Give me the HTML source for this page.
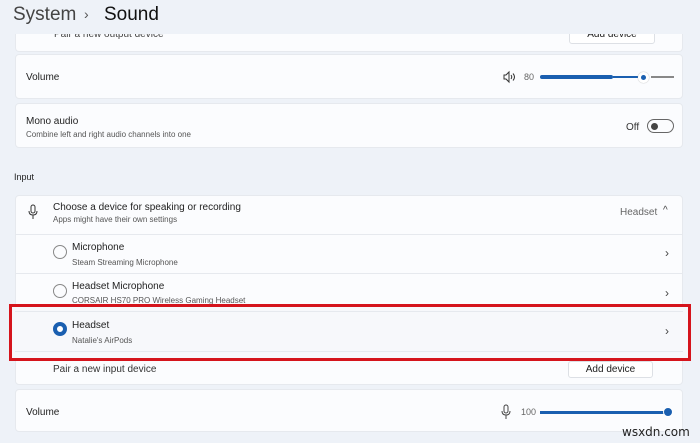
<!DOCTYPE html>
<html><head><meta charset="utf-8"><style>
*{box-sizing:border-box;margin:0;padding:0}
body{width:700px;height:443px;overflow:hidden;background:#eef2f8;font-family:"Liberation Sans",sans-serif;color:#1b1b1b;position:relative}
.a{position:absolute;white-space:nowrap}
.card{position:absolute;left:15px;width:668px;background:#fbfcfe;border-radius:4px;border:1px solid #e6e9ee}
.t{font-size:10px;color:#222}
.s{font-size:8px;color:#555}
.btn{position:absolute;background:#fff;border:1px solid #dde0e5;border-radius:3px;font-size:10px;text-align:center}
.chev{font-size:12px;color:#444}
.line{position:absolute;left:15px;width:668px;height:1px;background:#e6e9ee}
</style></head><body>
<div class="card" style="top:24px;height:28px;border-top:none;border-radius:0 0 4px 4px;overflow:hidden">
 <div class="a t" style="left:38px;top:5px;color:#444">Pair a new output device</div>
 <div class="btn" style="left:553px;top:1px;width:86px;height:19px;line-height:18px">Add device</div>
</div>
<div style="position:absolute;left:0;top:0;width:700px;height:34px;background:#eef2f8"></div>
<div class="a" style="left:13px;top:4px;font-size:19px;color:#444">System</div>
<div class="a" style="left:84px;top:6px;font-size:14px;color:#555">›</div>
<div class="a" style="left:104px;top:4px;font-size:19px;color:#111">Sound</div>

<div class="card" style="top:54px;height:45px">
 <div class="a t" style="left:10px;top:17px">Volume</div>
 <svg class="a" style="left:487px;top:15px" width="14" height="14" viewBox="0 0 14 14" fill="none" stroke="#333" stroke-width="1"><path d="M1 5h2l3-3v10l-3-3H1z"/><path d="M8 5q1.5 2 0 4M10 3.5q3 3.5 0 7"/></svg>
 <div class="a" style="left:508px;top:17px;font-size:9px;color:#666">80</div>
 <div class="a" style="left:524px;top:20px;width:73px;height:4px;background:#1a5fb0;border-radius:2px"></div>
 <div class="a" style="left:597px;top:21px;width:30px;height:2px;background:#1a5fb0"></div>
 <div class="a" style="left:622px;top:17px;width:11px;height:11px;border-radius:50%;background:#fff;box-shadow:0 0 1px #999"></div>
 <div class="a" style="left:625px;top:20px;width:5px;height:5px;border-radius:50%;background:#1a5fb0"></div>
 <div class="a" style="left:635px;top:21px;width:23px;height:2px;background:#888"></div>
</div>

<div class="card" style="top:103px;height:45px">
 <div class="a t" style="left:10px;top:12px">Mono audio</div>
 <div class="a s" style="left:10px;top:26px">Combine left and right audio channels into one</div>
 <div class="a" style="left:610px;top:18px;font-size:10px;color:#333">Off</div>
 <div class="a" style="left:631px;top:15px;width:27px;height:14px;border:1px solid #666;border-radius:7px"></div>
 <div class="a" style="left:635px;top:19px;width:7px;height:7px;border-radius:50%;background:#444"></div>
</div>

<div class="a" style="left:14px;top:172px;font-size:9px;color:#222">Input</div>

<div class="card" style="top:195px;height:190px"></div>
<svg class="a" style="left:28px;top:204px" width="10" height="16" viewBox="0 0 10 16" fill="none" stroke="#333" stroke-width="1"><rect x="3" y="1" width="4" height="8" rx="2"/><path d="M1 7q0 4 4 4t4-4M5 11v4"/></svg>
<div class="a t" style="left:53px;top:202px">Choose a device for speaking or recording</div>
<div class="a s" style="left:53px;top:215px">Apps might have their own settings</div>
<div class="a" style="left:620px;top:207px;font-size:10px;color:#666">Headset</div>
<div class="a" style="left:663px;top:205px;font-size:10px;color:#444">^</div>
<div class="line" style="top:234px"></div>

<div class="a" style="left:53px;top:245px;width:14px;height:14px;border:1px solid #888;border-radius:50%"></div>
<div class="a t" style="left:72px;top:242px">Microphone</div>
<div class="a s" style="left:72px;top:258px">Steam Streaming Microphone</div>
<div class="a chev" style="left:665px;top:246px">›</div>
<div class="line" style="top:273px"></div>

<div class="a" style="left:53px;top:284px;width:14px;height:14px;border:1px solid #888;border-radius:50%"></div>
<div class="a t" style="left:72px;top:281px">Headset Microphone</div>
<div class="a s" style="left:72px;top:296px">CORSAIR HS70 PRO Wireless Gaming Headset</div>
<div class="a chev" style="left:665px;top:286px">›</div>

<div class="a" style="left:9px;top:304px;width:682px;height:57px;background:#f7f8fb;border:3px solid #d5141c"></div>
<div class="line" style="top:311px"></div>
<div class="line" style="top:351px"></div>
<div class="a" style="left:53px;top:322px;width:14px;height:14px;border:4px solid #1a5fb0;border-radius:50%;background:#fff"></div>
<div class="a t" style="left:72px;top:320px">Headset</div>
<div class="a s" style="left:72px;top:336px">Natalie's AirPods</div>
<div class="a chev" style="left:665px;top:324px">›</div>

<div class="a t" style="left:53px;top:364px;color:#333">Pair a new input device</div>
<div class="btn" style="left:568px;top:361px;width:85px;height:17px;line-height:15px">Add device</div>

<div class="card" style="top:389px;height:43px">
 <div class="a t" style="left:10px;top:17px">Volume</div>
 <svg class="a" style="left:485px;top:14px" width="10" height="16" viewBox="0 0 10 16" fill="none" stroke="#444" stroke-width="1"><rect x="3" y="1" width="4" height="8" rx="2"/><path d="M1 7q0 4 4 4t4-4M5 11v4"/></svg>
 <div class="a" style="left:505px;top:17px;font-size:9px;color:#666">100</div>
 <div class="a" style="left:524px;top:21px;width:128px;height:3px;background:#1a5fb0"></div>
 <div class="a" style="left:647px;top:17px;width:10px;height:10px;border-radius:50%;background:#1a5fb0;border:1px solid #fff"></div>
</div>
<div class="a" style="left:622px;top:425px;font-size:12px;color:#222;font-family:'DejaVu Sans',sans-serif">wsxdn.com</div>
</body></html>
